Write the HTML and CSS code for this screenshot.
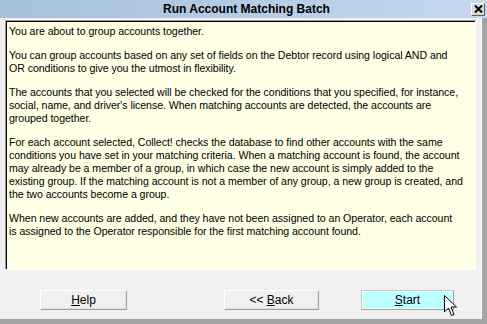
FILE: index.html
```html
<!DOCTYPE html>
<html lang="en">
<head>
  <meta charset="UTF-8">
  <title>Run Account Matching Batch</title>
  <link rel="stylesheet" href="styles.css">
</head>
<body>
  <div class="window">
    <div class="titlebar">
      <span></span>
      <span class="title">Run Account Matching Batch</span>
      <button class="close" title="Close">
        <svg width="9" height="8" viewBox="0 0 9 8"><path d="M1 0.5 L8 7.5 M8 0.5 L1 7.5" stroke="#000" stroke-width="2"/></svg>
      </button>
    </div>
    <div class="message">
      <p>You are about to group accounts together.</p>
      <p>You can group accounts based on any set of fields on the Debtor record using logical AND and<br>
      OR conditions to give you the utmost in flexibility.</p>
      <p>The accounts that you selected will be checked for the conditions that you specified, for instance,<br>
      social, name, and driver's license. When matching accounts are detected, the accounts are<br>
      grouped together.</p>
      <p>For each account selected, Collect! checks the database to find other accounts with the same<br>
      conditions you have set in your matching criteria. When a matching account is found, the account<br>
      may already be a member of a group, in which case the new account is simply added to the<br>
      existing group. If the matching account is not a member of any group, a new group is created, and<br>
      the two accounts become a group.</p>
      <p>When new accounts are added, and they have not been assigned to an Operator, each account<br>
      is assigned to the Operator responsible for the first matching account found.</p>
    </div>
    <div class="buttons">
      <button class="btn btn-help"><u>H</u>elp</button>
      <button class="btn btn-back">&lt;&lt; <u>B</u>ack</button>
      <button class="btn btn-start"><u>S</u>tart</button>
    </div>
  </div>
  <svg class="cursor" width="14" height="22" viewBox="0 0 14 22">
    <path d="M0.5 0.5 L0.5 17 L4.5 13 L7.5 20.5 L10 19.5 L7 12 L12.5 12 Z" fill="#fff" stroke="#000" stroke-width="1"/>
  </svg>
</body>
</html>
```

FILE: styles.css
```css
html { background: #a4a4a4; }
body {
  margin: 0;
  font-family: 'Liberation Sans', Arial, sans-serif;
  font-size: 11px;
  color: #000;
  position: relative;
}
.window {
  width: 482px;
  height: 319px;
  background: #f0f0f0;
  border-right: 1px solid #fff;
  box-sizing: border-box;
  display: flex;
  flex-direction: column;
}
.titlebar {
  height: 18px;
  margin-right: -6px;
  background: linear-gradient(to right, #a6c0dc, #c4d7ee);
  display: grid;
  grid-template-columns: 1fr auto 1fr;
  align-items: center;
}
.title {
  font-weight: bold;
  font-size: 12px;
  padding-left: 6px;
}
.close {
  justify-self: end;
  width: 14px;
  height: 13px;
  margin-right: 2px;
  padding: 0;
  background: #d8d8d8;
  border: 1px solid;
  border-color: #fff #606060 #606060 #fff;
  display: flex;
  align-items: center;
  justify-content: center;
}
.message {
  margin: 2px 5px 0 5px;
  height: 250px;
  box-sizing: border-box;
  padding: 4px 2px 0 3px;
  background: #ffffe6;
  border: 1px solid;
  border-color: #a0a0a0 #fff #fff #a0a0a0;
  box-shadow: inset 1px 1px 0 #000;
  font-size: 10.6px;
  letter-spacing: -0.05px;
  line-height: 13px;
  white-space: nowrap;
  overflow: hidden;
}
.message p { margin: 0 0 11px 0; }
.buttons {
  display: flex;
  margin-top: 20px;
  padding-left: 40px;
}
.btn {
  height: 20px;
  padding: 0;
  font-family: inherit;
  font-size: 12px;
  color: #000;
  background: #f0f0f0;
  border: 1px solid;
  border-color: #fff #a0a0a0 #a0a0a0 #fff;
  box-shadow: inset -1px -1px 0 #e0e0e0;
}
.btn-help { width: 87px; }
.btn-back { width: 95px; margin-left: 97px; }
.btn-start {
  width: 93px;
  margin-left: 42px;
  background: #bcffff;
  border-color: #c8c8c8 #a0a0a0 #a0a0a0 #c8c8c8;
  box-shadow: inset 0 0 0 1px #e6ffff;
}
.cursor {
  position: absolute;
  left: 444px;
  top: 295px;
}
```
